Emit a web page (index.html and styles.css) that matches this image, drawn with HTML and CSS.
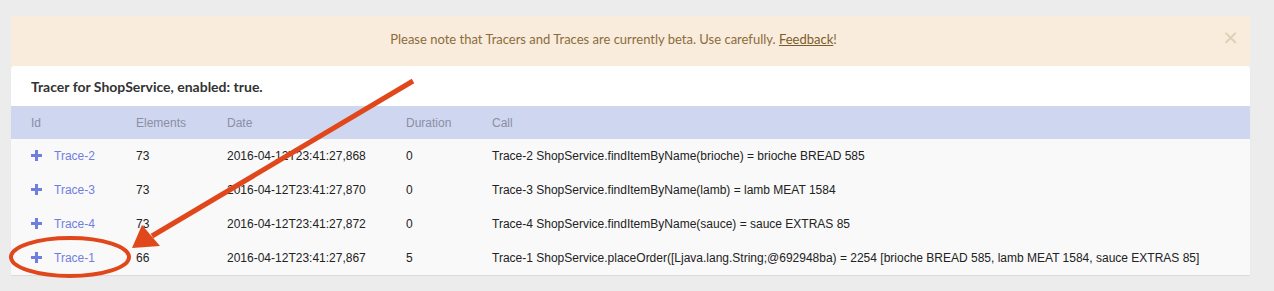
FILE: index.html
```html
<!DOCTYPE html>
<html>
<head>
<meta charset="utf-8">
<link rel="stylesheet" href="styles.css">
</head>
<body>
<div class="page">
  <div class="alert">
    <span class="alert-text">Please note that Tracers and Traces are currently beta. Use carefully. <a href="#" class="alert-link">Feedback</a>!</span>
    <span class="close">&times;</span>
  </div>
  <div class="panel">
    <div class="panel-title">Tracer for ShopService, enabled: true.</div>
    <table class="traces">
      <thead>
        <tr><th class="c-id">Id</th><th class="c-el">Elements</th><th class="c-date">Date</th><th class="c-dur">Duration</th><th>Call</th></tr>
      </thead>
      <tbody>
        <tr><td class="c-id"><span class="plus"></span><a href="#" class="link">Trace-2</a></td><td>73</td><td>2016-04-12T23:41:27,868</td><td>0</td><td>Trace-2 ShopService.findItemByName(brioche) = brioche BREAD 585</td></tr>
        <tr><td class="c-id"><span class="plus"></span><a href="#" class="link">Trace-3</a></td><td>73</td><td>2016-04-12T23:41:27,870</td><td>0</td><td>Trace-3 ShopService.findItemByName(lamb) = lamb MEAT 1584</td></tr>
        <tr><td class="c-id"><span class="plus"></span><a href="#" class="link">Trace-4</a></td><td>73</td><td>2016-04-12T23:41:27,872</td><td>0</td><td>Trace-4 ShopService.findItemByName(sauce) = sauce EXTRAS 85</td></tr>
        <tr><td class="c-id"><span class="plus"></span><a href="#" class="link">Trace-1</a></td><td>66</td><td>2016-04-12T23:41:27,867</td><td>5</td><td>Trace-1 ShopService.placeOrder([Ljava.lang.String;@692948ba) = 2254 [brioche BREAD 585, lamb MEAT 1584, sauce EXTRAS 85]</td></tr>
      </tbody>
    </table>
  </div>
  <svg class="annotation" width="1274" height="291" viewBox="0 0 1274 291">
    <line x1="413" y1="81" x2="152" y2="236" stroke="#e0481c" stroke-width="5" stroke-linecap="butt"/>
    <polygon points="132,248 142,225 160,246" fill="#e0481c"/>
    <ellipse cx="70" cy="257" rx="59" ry="19" fill="none" stroke="#e0481c" stroke-width="4"/>
  </svg>
</div>
</body>
</html>
```

FILE: styles.css
```css
html, body {
  margin: 0;
  padding: 0;
  background: #ececec;
}
.page {
  position: relative;
  width: 1274px;
  height: 291px;
  padding: 16px 24px 0 11px;
  box-sizing: border-box;
}
.alert {
  position: relative;
  height: 50px;
  background: #f9ecdc;
  display: flex;
  align-items: center;
  justify-content: center;
  padding: 0 49px 0 15px;
  font-family: Lato, "Open Sans", sans-serif;
  font-size: 13px;
  color: #8a6d3b;
}
.alert-text {
  position: relative;
  top: -2px;
}
.alert-link {
  color: #7c5c2c;
  text-decoration: underline;
}
.close {
  position: absolute;
  right: 11px;
  top: 11px;
  font-family: "DejaVu Sans", sans-serif;
  font-size: 20px;
  line-height: 20px;
  color: #dccfb3;
}
.panel {
  background: #f9f9f9;
  border-radius: 4px 4px 0 0;
  overflow: hidden;
  box-shadow: 0 1px 1px rgba(0,0,0,0.08);
}
.panel-title {
  height: 40px;
  background: #fff;
  padding: 0 20px;
  display: flex;
  align-items: center;
  font-family: Lato, "Open Sans", sans-serif;
  font-weight: bold;
  font-size: 14px;
  color: #333;
}
.traces {
  width: 100%;
  border-collapse: collapse;
  font-family: "Liberation Sans", Arial, sans-serif;
  font-size: 12px;
  color: #222;
}
.traces th {
  height: 33px;
  background: #cfd6f0;
  text-align: left;
  font-weight: normal;
  color: #8a8fa3;
  padding: 0;
}
.traces td {
  height: 34px;
  padding: 0;
}
.traces th.c-id, .traces td.c-id {
  padding-left: 20px;
  width: 105px;
}
.c-el { width: 91px; }
.c-date { width: 179px; }
.c-dur { width: 86px; }
.plus {
  display: inline-block;
  position: relative;
  width: 11px;
  height: 11px;
  margin-right: 12px;
  vertical-align: -1px;
}
.plus::before, .plus::after {
  content: "";
  position: absolute;
  background: #6f7fe0;
}
.plus::before {
  left: 0; right: 0;
  top: 4px; height: 3px;
}
.plus::after {
  top: 0; bottom: 0;
  left: 4px; width: 3px;
}
.link {
  color: #6f7fe0;
  text-decoration: none;
}
.annotation {
  position: absolute;
  left: 0;
  top: 0;
  pointer-events: none;
}
```
